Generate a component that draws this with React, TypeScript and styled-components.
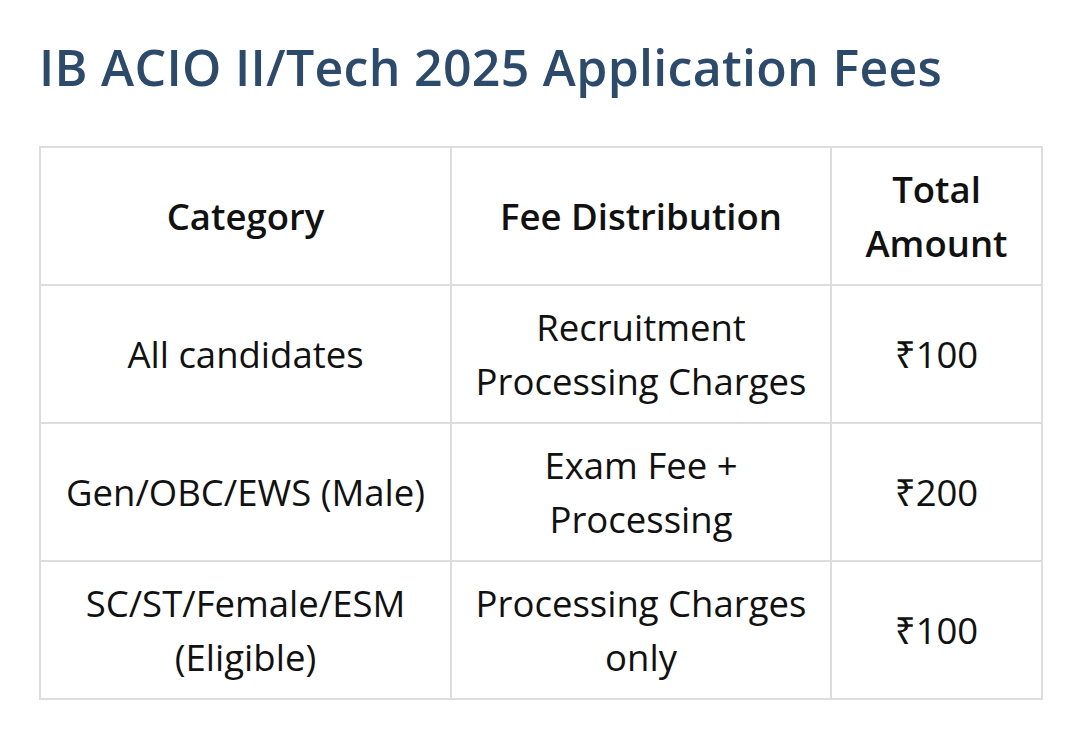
import * as React from 'react';
import styled, { createGlobalStyle } from 'styled-components';

const Global = createGlobalStyle`
  body {
    margin: 0;
    background: #ffffff;
    font-family: 'Open Sans', 'Noto Sans', sans-serif;
    color: #111;
  }
`;

const Page = styled.div`
  padding: 30px 39px 0 39px;
`;

const Title = styled.h2`
  margin: 0 0 41px 0;
  font-family: 'Open Sans', 'Noto Sans', sans-serif;
  font-size: 50px;
  font-weight: 600;
  line-height: 1.5;
  color: #2c4a6b;
  letter-spacing: 0.3px;
`;

const Table = styled.table`
  width: 1002px;
  border-collapse: collapse;
  table-layout: fixed;
  font-size: 36.5px;
  line-height: 54px;
`;

const Cell = styled.td<{ $head?: boolean }>`
  border: 2px solid #dddddd;
  padding: 14px 12px;
  text-align: center;
  vertical-align: middle;
  font-weight: ${p => (p.$head ? 600 : 400)};
  height: 107px;
`;

const rows = [
  ['All candidates', 'Recruitment Processing Charges', '₹100'],
  ['Gen/OBC/EWS (Male)', 'Exam Fee + Processing', '₹200'],
  ['SC/ST/Female/ESM (Eligible)', 'Processing Charges only', '₹100'],
];

export default function App() {
  return (
    <Page>
      <Global />
      <Title>IB ACIO II/Tech 2025 Application Fees</Title>
      <Table>
        <colgroup>
          <col style={{ width: 411 }} />
          <col style={{ width: 380 }} />
          <col style={{ width: 211 }} />
        </colgroup>
        <thead>
          <tr>
            <Cell as="th" $head>Category</Cell>
            <Cell as="th" $head>Fee Distribution</Cell>
            <Cell as="th" $head>Total Amount</Cell>
          </tr>
        </thead>
        <tbody>
          {rows.map(r => (
            <tr key={r[0]}>
              {r.map(c => (
                <Cell key={c}>{c}</Cell>
              ))}
            </tr>
          ))}
        </tbody>
      </Table>
    </Page>
  );
}
